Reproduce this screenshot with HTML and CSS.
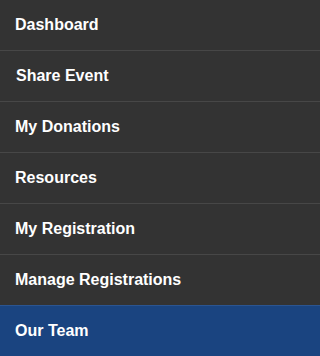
FILE: index.html
```html
<!DOCTYPE html>
<html lang="en">
<head>
<meta charset="utf-8">
<title>Menu</title>
<link rel="stylesheet" href="styles.css">
</head>
<body>
<nav class="side-nav">
  <ul class="nav-list">
    <li class="nav-item"><a class="nav-link" href="#">Dashboard</a></li>
    <li class="nav-item"><a class="nav-link nav-link-offset" href="#">Share Event</a></li>
    <li class="nav-item"><a class="nav-link" href="#">My Donations</a></li>
    <li class="nav-item"><a class="nav-link" href="#">Resources</a></li>
    <li class="nav-item"><a class="nav-link" href="#">My Registration</a></li>
    <li class="nav-item"><a class="nav-link" href="#">Manage Registrations</a></li>
    <li class="nav-item nav-item-active"><a class="nav-link" href="#">Our Team</a></li>
  </ul>
</nav>
</body>
</html>
```

FILE: styles.css
```css
html, body {
  margin: 0;
  padding: 0;
  background: #333333;
}

.side-nav {
  width: 100%;
  height: 356px;
  background: #333333;
  overflow: hidden;
  font-family: "Liberation Sans", Arial, sans-serif;
}

.nav-list {
  list-style: none;
  margin: 0;
  padding: 0;
  display: flex;
  flex-direction: column;
}

.nav-item {
  border-bottom: 1px solid #474747;
}

.nav-item-active {
  background: #1a4480;
  border-bottom: none;
  border-top: 1px solid #2b5591;
  margin-top: -1px;
}

.nav-link {
  display: flex;
  align-items: center;
  height: 50px;
  padding-left: 15px;
  color: #ffffff;
  font-size: 16px;
  font-weight: bold;
  text-decoration: none;
}

.nav-link-offset {
  padding-left: 16px;
}
```
